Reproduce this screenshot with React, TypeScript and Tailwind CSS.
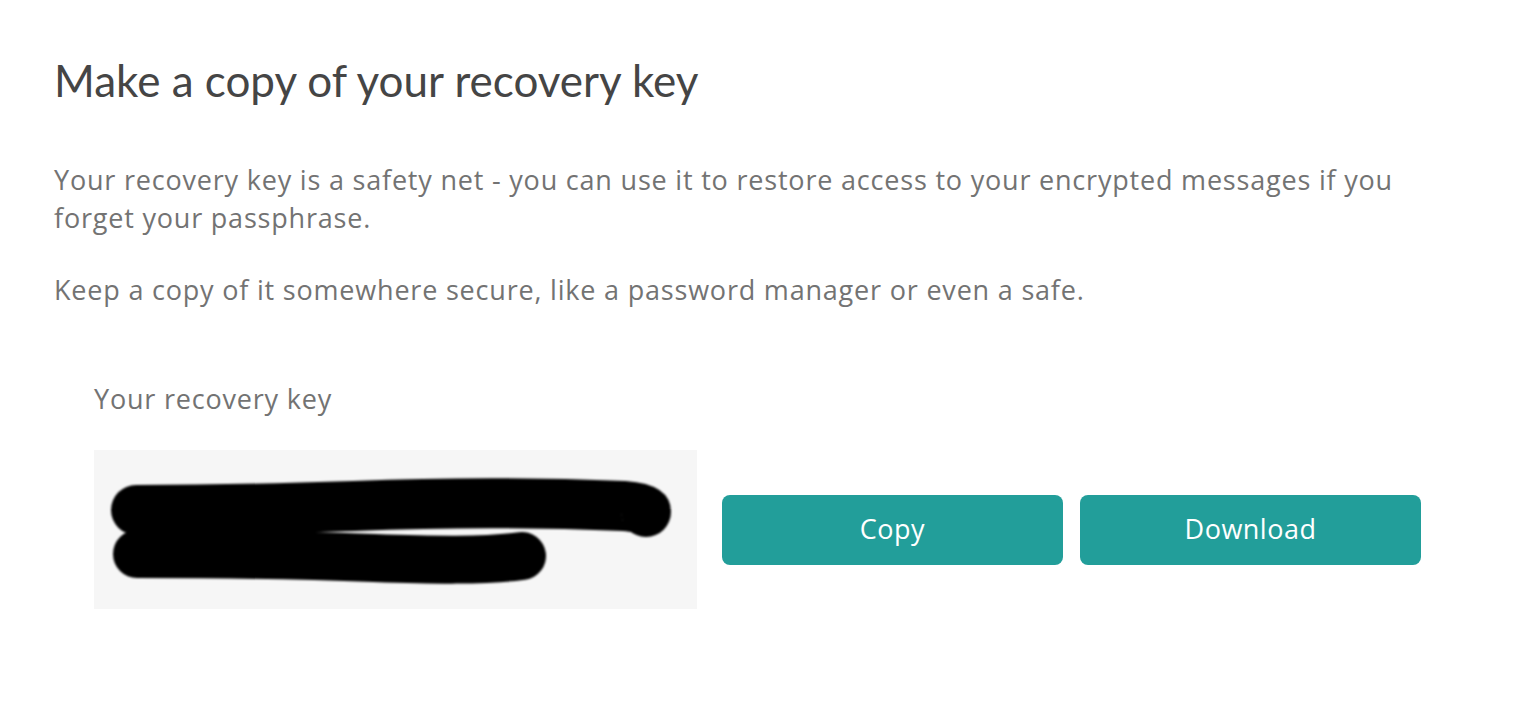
import React from 'react';

export default function App() {
  return (
    <div className="min-h-screen bg-white font-['Open_Sans','Liberation_Sans',sans-serif]">
      <div className="w-[1420px] pl-[54px] pt-[54px]">
        {/* Heading */}
        <h1 className="font-['Lato',sans-serif] text-[44px] leading-[52px] text-[#454545]">
          Make a copy of your recovery key
        </h1>

        {/* Explainer */}
        <div className="mt-[55px] space-y-[34px] text-[27px] leading-[38px] tracking-[0.8px] text-[#737373]">
          <p>
            Your recovery key is a safety net - you can use it to restore access to your encrypted messages if you forget your passphrase.
          </p>
          <p>Keep a copy of it somewhere secure, like a password manager or even a safe.</p>
        </div>

        {/* Key section */}
        <div className="mt-[71px] pl-[40px]">
          <div className="text-[27px] leading-[38px] tracking-[0.8px] text-[#737373]">Your recovery key</div>

          <div className="mt-[32px] flex items-center">
            <div className="h-[159px] w-[603px] bg-[#f6f6f6]">
              <svg width="603" height="159" viewBox="0 0 603 159" className="block">
                <defs>
                  <filter id="soft" x="-10%" y="-50%" width="120%" height="200%">
                    <feGaussianBlur stdDeviation="1" />
                  </filter>
                </defs>
                <g filter="url(#soft)" stroke="#000" strokeLinecap="round" strokeLinejoin="round" fill="none">
                  <path d="M43 104 C 120 104, 200 105, 280 108 C 340 110, 390 111, 428 106" strokeWidth="48" />
                  <path d="M42 60 C 120 60, 200 58, 260 56 C 360 52, 460 53, 530 56 C 545 57, 552 60, 552 62" strokeWidth="50" />
                </g>
              </svg>
            </div>

            <div className="ml-[25px] flex gap-[17px]">
              <button className="h-[70px] w-[341px] rounded-[8px] bg-[#229e9a] text-[27px] tracking-[0.5px] text-white">
                Copy
              </button>
              <button className="h-[70px] w-[341px] rounded-[8px] bg-[#229e9a] text-[27px] tracking-[0.5px] text-white">
                Download
              </button>
            </div>
          </div>
        </div>
      </div>
    </div>
  );
}
